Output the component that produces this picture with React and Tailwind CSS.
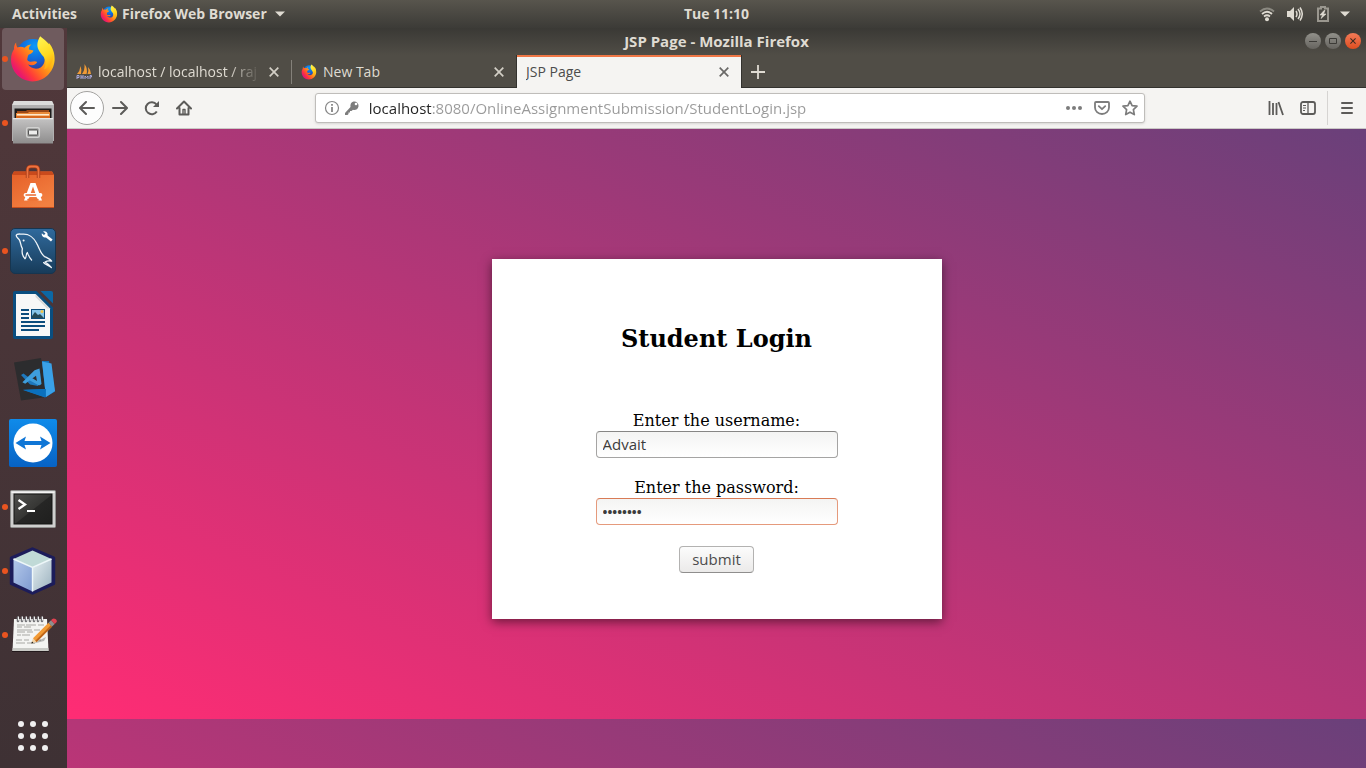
import React from "react";

function FirefoxLogo({ className }) {
  return (
    <svg viewBox="0 0 48 48" className={className} aria-hidden="true">
      <defs>
        <radialGradient id="fxGlobe" cx="0.55" cy="0.2" r="0.8">
          <stop offset="0" stopColor="#0a9bfa" />
          <stop offset="0.5" stopColor="#1268d8" />
          <stop offset="1" stopColor="#3a2a86" />
        </radialGradient>
        <linearGradient id="fxBody" x1="0.95" y1="0.15" x2="0.15" y2="0.75">
          <stop offset="0" stopColor="#ffe226" />
          <stop offset="0.3" stopColor="#ffb414" />
          <stop offset="0.55" stopColor="#ff7a1c" />
          <stop offset="0.8" stopColor="#ff3a3a" />
          <stop offset="1" stopColor="#e8186e" />
        </linearGradient>
        <linearGradient id="fxFlame" x1="0.3" y1="0" x2="0.6" y2="1">
          <stop offset="0" stopColor="#fff44f" />
          <stop offset="0.6" stopColor="#ffd91f" />
          <stop offset="1" stopColor="#ffa50f" />
        </linearGradient>
      </defs>
      <circle cx="24" cy="21.5" r="17.5" fill="url(#fxGlobe)" />
      <path
        d="M7.2 7.6C7 9.4 7.4 11 8.4 12.6 10.6 11.4 13.6 11.6 15.4 12.8 17.6 10.4 20 9.6 22.4 9.4 20.4 11 19.6 12.6 20 14.4L24.4 15.4C24 17.6 22 18.6 19.8 19.6 18.6 20.8 18.8 22.4 18.4 23.6 17.8 25 18.6 26 20.4 26.6 23 27.4 25.4 25.4 28.2 27 27 29.6 24 31.4 19 29.6 22 33.6 27.4 34.8 31.6 32.4 36 29.8 36.6 24 34.4 18.6 39 16 41 11 39.6 7.6 44 12.4 46 19.4 45.6 25.6 44.6 37.6 35 46.4 23.6 46.4 11.4 46.4 2 36.6 2 24.6 2 19.6 3.4 16.8 5 14.2 4.8 11.6 5.6 9.2 7.2 7.6Z"
        fill="url(#fxBody)"
      />
      <path
        d="M31.2 1.2C35.6 4.8 43 9.6 44.4 18.4 45.2 26 41 32 35 34.6 37.4 30 37 25.6 34.4 21.6 30.6 17 28 13.4 28.4 9 28.6 6 29.8 3.6 31.2 1.2Z"
        fill="url(#fxFlame)"
      />
    </svg>
  );
}

function FilesIcon() {
  return (
    <svg viewBox="0 0 48 48" className="size-12" aria-hidden="true">
      <defs>
        <linearGradient id="cabFront" x1="0" y1="0" x2="0" y2="1">
          <stop offset="0" stopColor="#c4c3c3" />
          <stop offset="1" stopColor="#8e8d8d" />
        </linearGradient>
      </defs>
      <path d="M5 2h38l2 4v36H3V6Z" fill="#b1b0b0" />
      <path d="M5 2h38l1.8 4H3.2Z" fill="#dcdcdb" />
      <rect x="5.5" y="9.500" width="37" height="11" fill="#1d1b1a" />
      <path d="M8 12h9l1-1h22v3H8Z" fill="#9c4817" />
      <path d="M7 14h12l1-1h21v7H7Z" fill="#e98a3a" />
      <rect x="8" y="15" width="32" height="1.500" fill="#ffe9cd" />
      <rect x="7" y="17" width="34" height="2" fill="#d9691e" />
      <path d="M4 19h40v25.500H4Z" fill="url(#cabFront)" />
      <path d="M4 19h40v1.200H4Z" fill="#e6e6e6" />
      <rect x="17.700" y="28.700" width="12.600" height="9.600" rx="1.500" fill="#8a8a89" stroke="#d2d2d1" strokeWidth="1.500" />
      <rect x="19.500" y="31" width="9" height="5" rx="0.800" fill="#ededec" stroke="#484848" strokeWidth="0.900" />
    </svg>
  );
}

function SoftwareIcon() {
  return (
    <svg viewBox="0 0 48 48" className="size-12" aria-hidden="true">
      <defs>
        <linearGradient id="bagFill" x1="0" y1="0" x2="0.6" y2="1">
          <stop offset="0" stopColor="#e55f28" />
          <stop offset="1" stopColor="#f38041" />
        </linearGradient>
      </defs>
      <path d="M5 8.500h38l2 3.500v33H3V12Z" fill="url(#bagFill)" />
      <path d="M5 8.500h38l2 3.500H3Z" fill="#ca4a1c" />
      <path d="M3 44h42v1H3Z" fill="#c44d1d" />
      <path d="M18.500 15V7q0-3.500 3.500-3.500h4q3.500 0 3.500 3.500v8" fill="none" stroke="#a63b17" strokeWidth="3.400" />
      <path d="M18.500 15V7q0-3.500 3.500-3.500h4q3.500 0 3.500 3.500v8" fill="none" stroke="#ee7340" strokeWidth="1.800" />
      <path d="M21.500 20h5L33 37.600h-4.200L24 23.600 19.200 37.600H15Z" fill="#fff" />
      <rect x="14.600" y="30" width="18.800" height="4" rx="2" fill="#fff" />
      <path d="M17 32h9.500" stroke="#ea6930" strokeWidth="1.500" strokeLinecap="round" />
      <path d="M18 37.500q0-2 2-2h8q2 0 2 2Z" fill="#ee7235" />
    </svg>
  );
}

function WorkbenchIcon() {
  return (
    <svg viewBox="0 0 48 48" className="size-12" aria-hidden="true">
      <defs>
        <linearGradient id="wbFill" x1="0" y1="0" x2="0" y2="1">
          <stop offset="0" stopColor="#306a9d" />
          <stop offset="1" stopColor="#173b59" />
        </linearGradient>
      </defs>
      <rect x="1.500" y="1.500" width="45" height="45" rx="4.500" fill="url(#wbFill)" stroke="#17354f" />
      <path
        d="M16 31.600C13.400 29 12.800 24.600 13.400 21.600 11.400 18.600 12 15.400 10.200 12.600 8.600 10.800 7.200 10.400 7.200 8.200 8 6.200 11 7.200 13.400 7.200 19.600 6.600 25 10.600 27.800 16.600 30.400 21 31.400 26.800 35.600 29.600 38.600 31 41 31.800 42.600 34.200 40.400 33.800 38 33.800 36 35 38.800 36.600 41 38 42.400 40.600 39.600 38.400 36 37.400 34.600 35.600"
        fill="none" stroke="#f0f5f9" strokeWidth="1.300" strokeLinecap="round" strokeLinejoin="round"
      />
      <path d="M16 31.600C18 30 16.600 26.400 18.400 25.600 19.400 28.400 20.400 30.600 22.600 33" fill="none" stroke="#f0f5f9" strokeWidth="1.200" strokeLinecap="round" />
      <circle cx="14.600" cy="13.600" r="1" fill="#f0f5f9" />
      <path d="M34 4.500A3.400 3.400 0 0 1 38.600 8.400L43.600 12.500 42 14.400 37 10.400A3.400 3.400 0 0 1 32.800 6.200L35 8 36.500 6.500Z" fill="#fff" />
    </svg>
  );
}

function WriterIcon() {
  return (
    <svg viewBox="0 0 48 48" className="size-12" aria-hidden="true">
      <path d="M6 0h21.500L44 16.500V46q0 2-2 2H6q-2 0-2-2V2q0-2 2-2Z" fill="#0a4e80" />
      <path d="M31.500 0H42q2 0 2 2v10.500Z" fill="#0c67a4" />
      <path d="M7 3h19.500L41 17.500V45H7Z" fill="#f7f7f7" />
      <path d="M26.500 3 41 17.500h-3L26.500 6Z" fill="#dadada" />
      <path d="M12 19h8M12 23h8M12 27h8M12 31h24M12 35h24M12 39h18" stroke="#0b4c7c" strokeWidth="2" />
      <rect x="22" y="18" width="14" height="10" fill="#0b4c7c" />
      <rect x="23" y="19" width="12" height="8" fill="#87c5e8" />
      <path d="M23 27v-2l3-4 3 3 2-1 4 4Z" fill="#264a55" />
      <circle cx="33" cy="20.500" r="1.500" fill="#f3c446" />
    </svg>
  );
}

function CodeIcon() {
  return (
    <svg viewBox="0 0 48 48" className="size-12" aria-hidden="true">
      <path d="M5 7.500 32 3 38 42 12 45.500Z" fill="#2c2c2e" />
      <path d="M33 6 40 6 46 36.500 36 42.500 14 35 36 34Z" fill="#1473ba" />
      <path d="M33 6.500 42.500 8.500 46 36 37 42Z" fill="#3aa1e8" />
      <path d="M14 34.800 37 34l-.5 8.300Z" fill="#0a70bd" />
      <path d="M31 14.200 31.500 30 25 26.500 14.500 18.600 12 20 21 29.500 29 31Z" fill="#1e78bd" />
      <path d="M30.500 13.400 25.600 15.200 13.400 27.200 16.200 28.800 27 20.800 28 26 21.500 22 20 25 30 30.500 32.500 29Z" fill="#3e9edc" />
    </svg>
  );
}

function TeamViewerIcon() {
  return (
    <svg viewBox="0 0 48 48" className="size-12" aria-hidden="true">
      <defs>
        <linearGradient id="tvFill" x1="0" y1="0" x2="0" y2="1">
          <stop offset="0" stopColor="#0f8bea" />
          <stop offset="1" stopColor="#0762c4" />
        </linearGradient>
      </defs>
      <rect width="48" height="48" rx="2" fill="url(#tvFill)" />
      <circle cx="24" cy="24" r="19.500" fill="#fff" />
      <path d="M6.500 24 17 17.500 15.500 22h17L31 17.500 41.500 24 31 30.500 32.500 26h-17L17 30.500Z" fill="#0f76d6" />
    </svg>
  );
}

function TerminalIcon() {
  return (
    <svg viewBox="0 0 48 48" className="size-12" aria-hidden="true">
      <defs>
        <linearGradient id="termFill" x1="0" y1="0" x2="1" y2="1">
          <stop offset="0" stopColor="#50504e" />
          <stop offset="0.500" stopColor="#363634" />
          <stop offset="0.520" stopColor="#262625" />
          <stop offset="1" stopColor="#1f1f1e" />
        </linearGradient>
      </defs>
      <rect x="1.500" y="7.500" width="45" height="37" rx="1" fill="#cfcfce" stroke="#8f8f8d" />
      <rect x="2.500" y="8.500" width="43" height="1.500" fill="#f4f4f3" />
      <rect x="5" y="11" width="38" height="30" fill="url(#termFill)" stroke="#141413" />
      <path d="M9.500 17 16 21.500 9.500 26" fill="none" stroke="#fff" strokeWidth="2.300" />
      <path d="M18 28h8" stroke="#fff" strokeWidth="2" />
    </svg>
  );
}

function NetBeansIcon() {
  return (
    <svg viewBox="0 0 48 48" className="size-12" aria-hidden="true">
      <defs>
        <linearGradient id="cubeL" x1="0" y1="0" x2="1" y2="1">
          <stop offset="0" stopColor="#b3c8ea" />
          <stop offset="1" stopColor="#7e9ad0" />
        </linearGradient>
        <linearGradient id="cubeR" x1="0" y1="0" x2="1" y2="1">
          <stop offset="0" stopColor="#e4eef1" />
          <stop offset="1" stopColor="#9cb2bf" />
        </linearGradient>
      </defs>
      <path d="M23.500 2 44.500 11V36.500L23.500 46 2.500 36.500V11Z" fill="#1c1c5a" stroke="#1c1c5a" strokeWidth="3.500" strokeLinejoin="round" />
      <path d="M23.500 3.500 42.500 12 23.500 20.500 4.500 12Z" fill="#c0dad7" />
      <path d="M4.500 12 23.500 20.500V44.500L4.500 35.500Z" fill="url(#cubeL)" />
      <path d="M42.500 12 23.500 20.500V44.500L42.500 35.500Z" fill="url(#cubeR)" />
      <path d="M4.500 12 23.500 20.500 42.500 12M23.500 20.500v24" fill="none" stroke="#eef7f9" strokeWidth="1.400" />
    </svg>
  );
}

function EditorIcon() {
  return (
    <svg viewBox="0 0 48 48" className="size-12" aria-hidden="true">
      <path d="M3 41h37v-1H3Z" fill="#23191c" />
      <path d="M5 8h33l1.500 32H3.500Z" fill="#f4f4f2" />
      <path d="M3.600 37h35.800v3H3.500Z" fill="#c9cac6" />
      <path d="M8 14h8m1 0h10m2 0h6M8 16h5m2 0h7M8 19h15m2 0h6M8 21h8m2 0h6M8 24h4m1 0h8M7 29h6m2 0h5m4 0h8M7 32h9m2 0h8" stroke="#a8a8a4" strokeWidth="1" />
      <path d="M9 10V6.500M13 10V6.500M17 10V6.500M21 10V6.500M25 10V6.500M29 10V6.500M33 10V6.500" stroke="#77777a" strokeWidth="2.600" strokeLinecap="round" />
      <path d="M9.500 9V6M13.500 9V6M17.500 9V6M21.500 9V6M25.500 9V6M29.500 9V6M33.500 9V6" stroke="#f2f2f2" strokeWidth="1" strokeLinecap="round" />
      <path d="M23 33 37 26 35 30Z" fill="#000" opacity="0.250" />
      <path d="M22.300 32.600 24 27.300 27.600 31Z" fill="#f3d3a4" />
      <path d="M22.300 32.600 23 30.400 24.500 32Z" fill="#111" />
      <path d="M24 27.300 39.500 11.800 43.100 15.500 27.600 31Z" fill="#f29a35" />
      <path d="M26.300 29.700 41.800 14.200 43.100 15.500 27.600 31Z" fill="#bd6419" />
      <path d="M39.500 11.800 42 9.300 45.700 13 43.100 15.500Z" fill="#8f8f8f" />
      <path d="M42 9.300q2-3 4.500-1.300 2.500 2 .5 3.700L45.700 13Z" fill="#e04251" />
    </svg>
  );
}

const dockItems = [
  { name: "Firefox Web Browser", icon: <FirefoxLogo className="size-12" />, running: true, active: true },
  { name: "Files", icon: <FilesIcon />, running: true },
  { name: "Ubuntu Software", icon: <SoftwareIcon /> },
  { name: "MySQL Workbench", icon: <WorkbenchIcon />, running: true },
  { name: "LibreOffice Writer", icon: <WriterIcon /> },
  { name: "Visual Studio Code", icon: <CodeIcon /> },
  { name: "TeamViewer", icon: <TeamViewerIcon /> },
  { name: "Terminal", icon: <TerminalIcon />, running: true },
  { name: "NetBeans", icon: <NetBeansIcon />, running: true },
  { name: "Text Editor", icon: <EditorIcon />, running: true },
];

function TopBar() {
  return (
    <header className="grid h-7 shrink-0 grid-cols-[1fr_auto_1fr] items-center bg-linear-to-b from-[#58554d] to-[#3c3b37] text-sm font-bold text-[#dfdbd2]">
      <div className="flex items-center gap-[23px] pl-3">
        <button type="button">Activities</button>
        <button type="button" className="flex items-center gap-1">
          <FirefoxLogo className="size-[18px]" />
          Firefox Web Browser
          <svg viewBox="0 0 10 6" className="ml-1 h-[6px] w-[10px]" aria-hidden="true">
            <path d="M0 .5h10L5 5.500Z" fill="#dfdbd2" />
          </svg>
        </button>
      </div>
      <time className="pl-[67px]">Tue 11:10</time>
      <button type="button" aria-label="System menu" className="flex items-center gap-[9px] justify-self-end pr-4">
        <span className="flex items-center gap-3">
          <svg viewBox="0 0 16 16" className="size-4" fill="none" aria-hidden="true">
            <path d="M1 5.500Q8-.5 15 5.500" stroke="#8b8981" strokeWidth="1.800" />
            <path d="M3 8q5-4.500 10 0M5 10.500q3-2.500 6 0" stroke="#dfdbd2" strokeWidth="1.700" />
            <circle cx="8" cy="13.200" r="2" fill="#dfdbd2" />
          </svg>
          <svg viewBox="0 0 16 16" className="size-4" fill="none" aria-hidden="true">
            <path d="M0 5h3l4-4v14l-4-4H0Z" fill="#dfdbd2" />
            <path d="M9 5q2 3 0 6M11 3q4 5 0 10M13 1.500q4.500 6.500 0 13" stroke="#dfdbd2" strokeWidth="1.500" />
          </svg>
          <svg viewBox="0 0 16 16" className="size-4" fill="none" aria-hidden="true">
            <path d="M3 2.500h3v-1.500h4v1.500h3v12.500H3Z" stroke="#9a978f" strokeWidth="2" />
            <path d="M9 4.500 5 9h2.500L6 12.500 11 8H8.500L10 4.500Z" fill="#dfdbd2" stroke="#dfdbd2" strokeWidth="0.600" />
          </svg>
        </span>
        <svg viewBox="0 0 10 6" className="h-[6px] w-[10px]" aria-hidden="true">
          <path d="M0 .5h10L5 5.500Z" fill="#dfdbd2" />
        </svg>
      </button>
    </header>
  );
}

function Dock() {
  return (
    <nav aria-label="Dock" className="flex w-[67px] shrink-0 flex-col justify-between bg-linear-to-b from-[#51383b] to-[#3e3134] px-[2px]">
      <ul className="flex flex-col gap-[2px]">
        {dockItems.map((item) => (
          <li key={item.name}>
            <button
              type="button"
              aria-label={item.name}
              className={
                item.active
                  ? "relative flex size-[62px] items-center justify-center rounded bg-[#6f5b5e]"
                  : "relative flex size-[62px] items-center justify-center rounded"
              }
            >
              {item.running && <span className="absolute top-7 left-0 size-[6px] rounded-full bg-[#e95420]" />}
              {item.icon}
            </button>
          </li>
        ))}
      </ul>
      <button type="button" aria-label="Show applications" className="mb-[17px] ml-4 grid w-[30px] grid-cols-3 gap-[6px]">
        {[0, 1, 2, 3, 4, 5, 6, 7, 8].map((n) => (
          <span key={n} className="size-[6px] rounded-full bg-[#f0eff0]" />
        ))}
      </button>
    </nav>
  );
}

function Cross({ className }) {
  return (
    <svg viewBox="0 0 10 10" className={className} aria-hidden="true">
      <path d="M.7.7l8.600 8.600M9.300.7L.7 9.300" stroke="currentColor" strokeWidth="1.700" fill="none" />
    </svg>
  );
}

function Tab({ title, icon, active, divided, faded }) {
  return (
    <div
      className={
        active
          ? "-ml-px flex w-[226px] items-center border-x border-[#33322e] bg-[#f5f4f2] pr-3 pl-[9px] text-[#4c4c4c] shadow-[inset_0_2px_#f07746]"
          : "flex w-[225px] items-center pr-[13px] pl-[9px] text-[#dfdbd2] shadow-[inset_0_-1px_#33322e]"
      }
    >
      <button type="button" role="tab" aria-selected={Boolean(active)} className="flex min-w-0 flex-1 items-center gap-[6px] overflow-hidden">
        {icon}
        <span
          className={
            faded
              ? "flex-1 overflow-hidden text-left whitespace-nowrap [mask-image:linear-gradient(to_right,black_80%,transparent)]"
              : "flex-1 text-left whitespace-nowrap"
          }
        >
          {title}
        </span>
      </button>
      <button type="button" aria-label={"Close " + title} className={active ? "ml-2 text-[#6a6967]" : "ml-2 text-[#d3cfc6]"}>
        <Cross className="size-[10px]" />
      </button>
      {divided && <span className="-mr-[13px] ml-3 h-6 w-px bg-[#84817a]" />}
    </div>
  );
}

function WindowHeader() {
  return (
    <div className="bg-[#504d46]">
      <div className="grid h-[27px] grid-cols-[1fr_auto_1fr] items-center bg-linear-to-b from-[#3a3935] to-[#504d46] px-[5px] pb-[2px] font-bold text-[#dfdbd2]">
        <span />
        <h1 className="text-[15px] leading-5">JSP Page - Mozilla Firefox</h1>
        <div className="flex gap-1 justify-self-end">
          <button type="button" aria-label="Minimize" className="flex size-4 items-center justify-center rounded-full bg-linear-to-b from-[#92918b] to-[#66645f]">
            <svg viewBox="0 0 8 8" className="size-2" aria-hidden="true"><path d="M0 4.500h8" stroke="#3c3b37" /></svg>
          </button>
          <button type="button" aria-label="Maximize" className="flex size-4 items-center justify-center rounded-full bg-linear-to-b from-[#92918b] to-[#66645f]">
            <svg viewBox="0 0 8 8" className="size-2" aria-hidden="true"><path d="M.5 1.500h7v5h-7Z" fill="none" stroke="#3c3b37" /></svg>
          </button>
          <button type="button" aria-label="Close window" className="flex size-4 items-center justify-center rounded-full bg-linear-to-b from-[#f37a56] to-[#de4d1d] text-[#3c2a20]">
            <Cross className="size-[6px]" />
          </button>
        </div>
      </div>
      <div role="tablist" className="flex h-[33px] text-sm">
        <Tab
          title="localhost / localhost / raj"
          divided
          faded
          icon={
            <svg viewBox="0 0 16 16" className="size-4 shrink-0" aria-hidden="true">
              <path d="M1 10Q4 7 4.500 2 6 6 5 10ZM6 10Q9 6 8.500 0 12 5 10.500 10ZM11.500 10Q13 7 12 3 15 6 15 10Z" fill="#f29b35" />
              <path d="M1 15v-3.500h2v2H1M5 11v4m0-2h2m0-2v4M9 15v-3l1.500 1.500L12 12v3M14 15v-3.500h1.500V13H14" fill="none" stroke="#a9a8d8" strokeWidth="1" />
            </svg>
          }
        />
        <Tab title="New Tab" icon={<FirefoxLogo className="size-4 shrink-0" />} />
        <Tab title="JSP Page" active />
        <div className="flex flex-1 items-center pl-[9px] shadow-[inset_0_-1px_#33322e]">
          <button type="button" aria-label="Open a new tab">
            <svg viewBox="0 0 14 14" className="size-[14px]" aria-hidden="true">
              <path d="M7 0v14M0 7h14" stroke="#dfdbd2" strokeWidth="1.800" />
            </svg>
          </button>
        </div>
      </div>
    </div>
  );
}

function ToolIcon({ label, children }) {
  return (
    <button type="button" aria-label={label} className="flex size-8 shrink-0 items-center justify-center text-[#5c5b59]">
      <svg viewBox="0 0 16 16" className="size-4" fill="none" stroke="currentColor" strokeWidth="2" strokeLinecap="round" strokeLinejoin="round" aria-hidden="true">
        {children}
      </svg>
    </button>
  );
}

function NavBar() {
  return (
    <div className="flex h-[41px] items-center border-b border-[#cac8c6] bg-[#f5f4f2] pl-[3px]">
      <button type="button" aria-label="Back" className="flex size-[34px] shrink-0 items-center justify-center rounded-full border border-[#a3a2a0] bg-[#fdfdfd] text-[#5c5b59]">
        <svg viewBox="0 0 16 16" className="size-4" fill="none" stroke="currentColor" strokeWidth="2" strokeLinecap="round" strokeLinejoin="round" aria-hidden="true">
          <path d="M15 8H1.500M7 2 1 8l6 6" />
        </svg>
      </button>
      <ToolIcon label="Forward"><path d="M1 8h13.500M9 2l6 6-6 6" /></ToolIcon>
      <ToolIcon label="Reload">
        <path d="M12.800 11.500A6 6 0 1 1 12.500 4.500L14 6" strokeLinecap="butt" />
        <path d="M15 1v6H9Z" fill="currentColor" stroke="none" />
      </ToolIcon>
      <ToolIcon label="Home">
        <path d="M1 8.500 8 1.500l7 7M3.500 8v6.500h9V8" />
        <path d="M7 14v-4.500h2V14" strokeWidth="1.400" />
      </ToolIcon>
      <div className="flex-[117]" />
      <div className="flex h-[30px] flex-[830] items-center rounded-[3px] border border-[#bfbdba] bg-white pr-[6px] pl-2 shadow-sm">
        <svg viewBox="0 0 16 16" className="size-4 shrink-0" fill="none" stroke="#858585" aria-hidden="true">
          <circle cx="8" cy="8" r="6.500" strokeWidth="1.200" />
          <path d="M8 7v5M8 4v1.700" strokeWidth="1.800" />
        </svg>
        <svg viewBox="0 0 16 16" className="ml-1 size-4 shrink-0" aria-hidden="true">
          <path d="M9.500 1.500a4.300 4.300 0 0 1 5 5c-.5 3-3.500 4-5.500 3.300L7.500 11H6v1.500H4.500V14L3.500 15H1v-2L6.500 7C6 4.500 7 2 9.500 1.500Z" fill="#7d7d7d" />
          <circle cx="12" cy="4" r="1.300" fill="#fff" />
        </svg>
        <input
          type="text"
          aria-label="Address"
          defaultValue="localhost:8080/OnlineAssignmentSubmission/StudentLogin.jsp"
          className="ml-[9px] h-6 min-w-0 flex-1 bg-[linear-gradient(to_right,#222222_63px,#999999_63px)] bg-clip-text text-[15px] leading-6 text-transparent caret-black outline-none"
        />
        <div className="flex gap-3 text-[#7c7c7c]">
          <button type="button" aria-label="Page actions">
            <svg viewBox="0 0 16 16" className="size-4" fill="currentColor" aria-hidden="true">
              <circle cx="2" cy="8" r="2" /><circle cx="8" cy="8" r="2" /><circle cx="14" cy="8" r="2" />
            </svg>
          </button>
          <button type="button" aria-label="Save to Pocket">
            <svg viewBox="0 0 16 16" className="size-4" fill="none" stroke="currentColor" strokeWidth="1.800" strokeLinecap="round" strokeLinejoin="round" aria-hidden="true">
              <path d="M2 2h12q1 0 1 1v4.500a7 6.500 0 0 1-14 0V3q0-1 1-1Z" />
              <path d="M4.800 6.200 8 9.200l3.200-3" />
            </svg>
          </button>
          <button type="button" aria-label="Bookmark this page">
            <svg viewBox="0 0 16 16" className="size-4" fill="none" stroke="currentColor" strokeWidth="1.700" strokeLinejoin="round" aria-hidden="true">
              <path d="M8 1.200 10.100 5.600 15 6.200 11.400 9.600 12.300 14.600 8 12.200 3.700 14.600 4.600 9.600 1 6.200 5.900 5.600Z" />
            </svg>
          </button>
        </div>
      </div>
      <div className="flex-[117]" />
      <ToolIcon label="Library">
        <path d="M1.500 1v14M5 3V15M8.500 3V15M10.500 2 15 15" strokeWidth="1.800" strokeLinecap="butt" />
      </ToolIcon>
      <ToolIcon label="Sidebars">
        <rect x="1" y="2" width="14" height="12" rx="2" strokeWidth="1.800" />
        <path d="M8 2v12" strokeWidth="1.300" />
        <path d="M3 5.500h3M3 8h3M3 10.500h2" strokeWidth="1.100" strokeLinecap="butt" />
      </ToolIcon>
      <span className="mr-[3px] ml-[3px] h-[34px] w-px shrink-0 bg-[#d6d4d2]" />
      <ToolIcon label="Menu"><path d="M3 3h10M3 8h10M3 13h10" /></ToolIcon>
      <span className="w-[3px] shrink-0" />
    </div>
  );
}

function LoginPage() {
  return (
    <main className="flex flex-1 items-start justify-center bg-[linear-gradient(to_top_right,#ff2c74,#6a407a)] bg-[length:100%_590px] pt-[130px] font-['DejaVu_Serif',serif] text-black">
      <form
        onSubmit={(e) => e.preventDefault()}
        className="flex w-[450px] flex-col items-center bg-white pt-[66px] pb-[46px] shadow-[0_3px_10px_rgba(0,0,0,0.5)]"
      >
        <h2 className="mb-[58px] text-2xl leading-7 font-bold">Student Login</h2>
        <label htmlFor="username" className="text-base leading-5">Enter the username:</label>
        <input
          id="username"
          type="text"
          defaultValue="Advait"
          className="mb-5 h-[27px] w-[242px] rounded-[4px] border border-[#a5a4a3] border-t-[#878685] bg-linear-to-b from-[#f4f4f3] to-white px-[6px] pb-[2px] font-['Open_Sans',sans-serif] text-[15px] text-[#3c3c3c] outline-none"
        />
        <label htmlFor="password" className="text-base leading-5">Enter the password:</label>
        <input
          id="password"
          type="password"
          defaultValue="advait12"
          className="mb-[21px] h-[27px] w-[242px] rounded-[4px] border border-[#e59a7c] border-t-[#d97b56] bg-linear-to-b from-[#f4f4f3] to-white px-[6px] font-['Open_Sans',sans-serif] text-[13px] font-bold text-[#3c3c3c] outline-none"
        />
        <button
          type="submit"
          className="h-[27px] w-[75px] rounded-[4px] border border-[#b3b2b1] border-b-[#8f8e8d] bg-linear-to-b from-[#fcfcfc] to-[#ebeae9] pb-[2px] font-['Open_Sans',sans-serif] text-[15px] leading-6 text-[#4c4c4c]"
        >
          submit
        </button>
      </form>
    </main>
  );
}

export default function App() {
  return (
    <div className="flex min-h-screen flex-col font-['Open_Sans',sans-serif]">
      <TopBar />
      <div className="flex flex-1">
        <Dock />
        <section aria-label="Mozilla Firefox" className="flex min-w-0 flex-1 flex-col">
          <WindowHeader />
          <NavBar />
          <LoginPage />
        </section>
      </div>
    </div>
  );
}
